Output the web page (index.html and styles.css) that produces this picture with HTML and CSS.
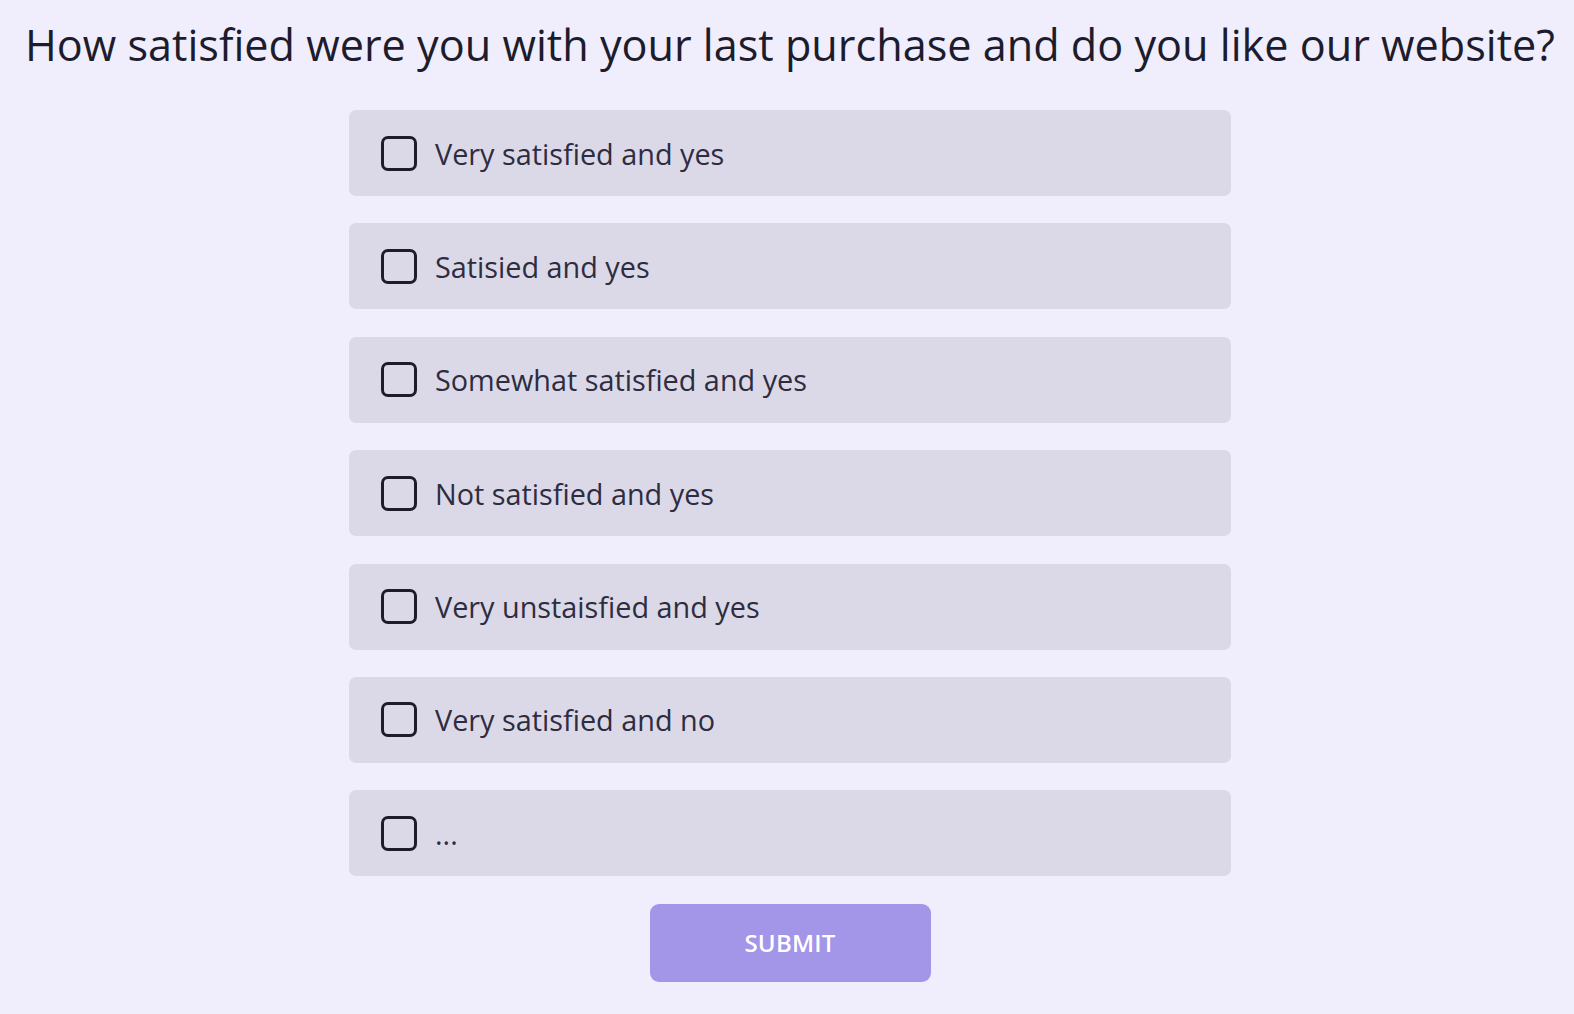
FILE: index.html
```html
<!DOCTYPE html>
<html lang="en">
<head>
<meta charset="utf-8">
<title>Survey</title>
<link rel="stylesheet" href="styles.css">
</head>
<body>
<main class="survey">
  <h1 class="question">How satisfied were you with your last purchase and do you like our website?</h1>
  <form class="options">
    <label class="option"><span class="box"></span><span class="label">Very satisfied and yes</span></label>
    <label class="option"><span class="box"></span><span class="label">Satisied and yes</span></label>
    <label class="option"><span class="box"></span><span class="label">Somewhat satisfied and yes</span></label>
    <label class="option"><span class="box"></span><span class="label">Not satisfied and yes</span></label>
    <label class="option"><span class="box"></span><span class="label">Very unstaisfied and yes</span></label>
    <label class="option"><span class="box"></span><span class="label">Very satisfied and no</span></label>
    <label class="option"><span class="box"></span><span class="label">...</span></label>
    <button type="button" class="submit">SUBMIT</button>
  </form>
</main>
</body>
</html>
```

FILE: styles.css
```css
html, body {
  margin: 0;
  padding: 0;
  background: #f0eefc;
}
body {
  font-family: "Open Sans", "Noto Sans", sans-serif;
  color: #1d1c2c;
}
.survey {
  display: flex;
  flex-direction: column;
  align-items: center;
  padding: 15px 0 0 6px;
}
.question {
  margin: 0;
  font-size: 43.2px;
  font-weight: 400;
  line-height: 60px;
  white-space: nowrap;
  color: #1d1c2c;
}
.options {
  margin-top: 35px;
  display: flex;
  flex-direction: column;
  align-items: center;
  gap: 27.4px;
}
.option {
  width: 882px;
  height: 86px;
  box-sizing: border-box;
  background: #dbd9e7;
  border-radius: 7px;
  display: flex;
  align-items: center;
  padding-left: 32px;
  gap: 18px;
}
.box {
  width: 36px;
  height: 35px;
  box-sizing: border-box;
  border: 3px solid #1d1c2c;
  border-radius: 7px;
  flex: none;
}
.label {
  font-size: 28.8px;
  color: #2e2c40;
}
.submit {
  margin-top: 0;
  width: 281px;
  height: 78px;
  border: none;
  border-radius: 9px;
  background: #a396e8;
  color: #ffffff;
  font-family: "Open Sans", "Noto Sans", sans-serif;
  font-size: 24px;
  font-weight: 600;
  letter-spacing: 0.2px;
}
```
